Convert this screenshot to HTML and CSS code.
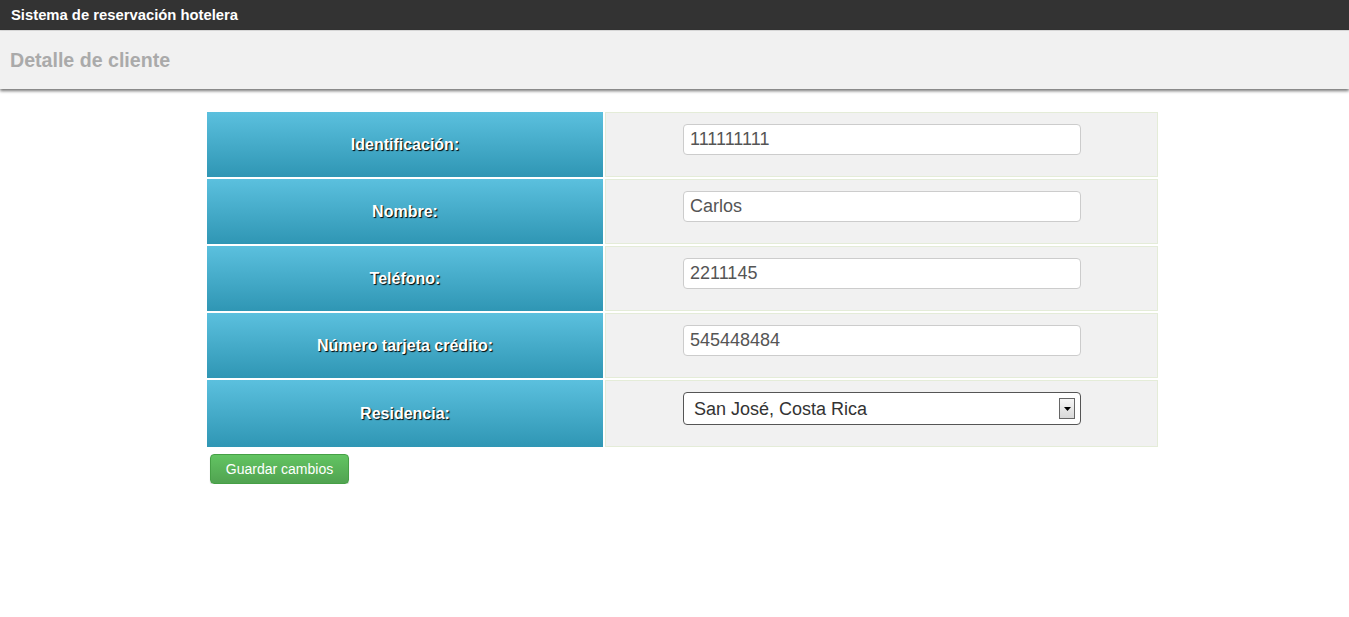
FILE: index.html
```html
<!DOCTYPE html>
<html lang="es">
<head>
<meta charset="utf-8">
<title>Detalle de cliente</title>
<link rel="stylesheet" href="styles.css">
</head>
<body>
<div class="topbar">Sistema de reservación hotelera</div>
<div class="pagehead"><h1>Detalle de cliente</h1></div>
<main class="content">
  <form class="form">
    <div class="grid">
      <div class="label">Identificación:</div>
      <div class="field"><input class="text" type="text" value="111111111"></div>
      <div class="label">Nombre:</div>
      <div class="field"><input class="text" type="text" value="Carlos"></div>
      <div class="label">Teléfono:</div>
      <div class="field"><input class="text" type="text" value="2211145"></div>
      <div class="label">Número tarjeta crédito:</div>
      <div class="field"><input class="text" type="text" value="545448484"></div>
      <div class="label">Residencia:</div>
      <div class="field">
        <div class="selectwrap">
          <select class="select"><option>San José, Costa Rica</option></select>
          <span class="drop"><svg width="7" height="4" viewBox="0 0 7 4"><path d="M0 0h7L3.5 4z" fill="#000"/></svg></span>
        </div>
      </div>
    </div>
    <button type="button" class="btn">Guardar cambios</button>
  </form>
</main>
</body>
</html>
```
FILE: styles.css
```css
html, body { margin: 0; padding: 0; background: #fff; }
body { font-family: "Liberation Sans", Arial, sans-serif; }

.topbar {
  height: 30px;
  background: #333;
  color: #fff;
  font-weight: bold;
  font-size: 14.8px;
  line-height: 30px;
  padding-left: 11px;
  border-bottom: 1px solid #ddd;
}
.pagehead {
  height: 58px;
  background: #f1f1f1;
  box-shadow: 0 2px 3px rgba(0,0,0,0.55);
  display: flex;
  align-items: center;
  padding-left: 10px;
  position: relative;
}
.pagehead h1 {
  margin: 0;
  font-size: 19.6px;
  font-weight: bold;
  color: #aaa;
}
.content { padding: 23px 0 0 207px; }
.grid {
  display: grid;
  grid-template-columns: 396px 553px;
  grid-template-rows: repeat(4, 65px) 67px;
  gap: 2px;
}
.label {
  background: linear-gradient(#5bc0de, #2f96b4);
  color: #fff;
  font-weight: bold;
  font-size: 16px;
  text-shadow: 1px 1px 1px #000;
  display: flex;
  align-items: center;
  justify-content: center;
}
.field {
  background: #f1f1f1;
  border: 1px solid #e4ecd8;
  box-sizing: border-box;
  display: flex;
  justify-content: center;
  padding-top: 11px;
}
.text {
  width: 398px;
  height: 31px;
  box-sizing: border-box;
  border: 1px solid #ccc;
  border-radius: 4px;
  background: #fff;
  padding: 0 6px;
  font-family: "Liberation Sans", Arial, sans-serif;
  font-size: 18px;
  color: #555;
  margin: 0 0 0 1px;
}
.selectwrap { position: relative; width: 398px; height: 33px; margin-left: 1px; }
.select {
  -webkit-appearance: none;
  appearance: none;
  width: 398px;
  height: 33px;
  box-sizing: border-box;
  border: 1px solid #555;
  border-radius: 4px;
  background: #fff;
  padding: 0 10px;
  font-family: "Liberation Sans", Arial, sans-serif;
  font-size: 18px;
  color: #333;
  margin: 0;
}
.drop {
  position: absolute;
  right: 6px;
  top: 6px;
  width: 16px;
  height: 21px;
  box-sizing: border-box;
  border: 1px solid #666;
  background: linear-gradient(#f6f6f6, #d8d8d8);
  display: flex;
  align-items: center;
  justify-content: center;
  pointer-events: none;
}
.btn {
  display: block;
  margin: 7px 0 0 3px;
  width: 139px;
  height: 30px;
  border: 1px solid #46a046;
  border-radius: 4px;
  background: linear-gradient(#62c462, #51a351);
  color: #fff;
  font-family: "Liberation Sans", Arial, sans-serif;
  font-size: 14px;
  padding: 0;
  box-shadow: 0 1px 1px rgba(0,0,0,0.2);
}
```
